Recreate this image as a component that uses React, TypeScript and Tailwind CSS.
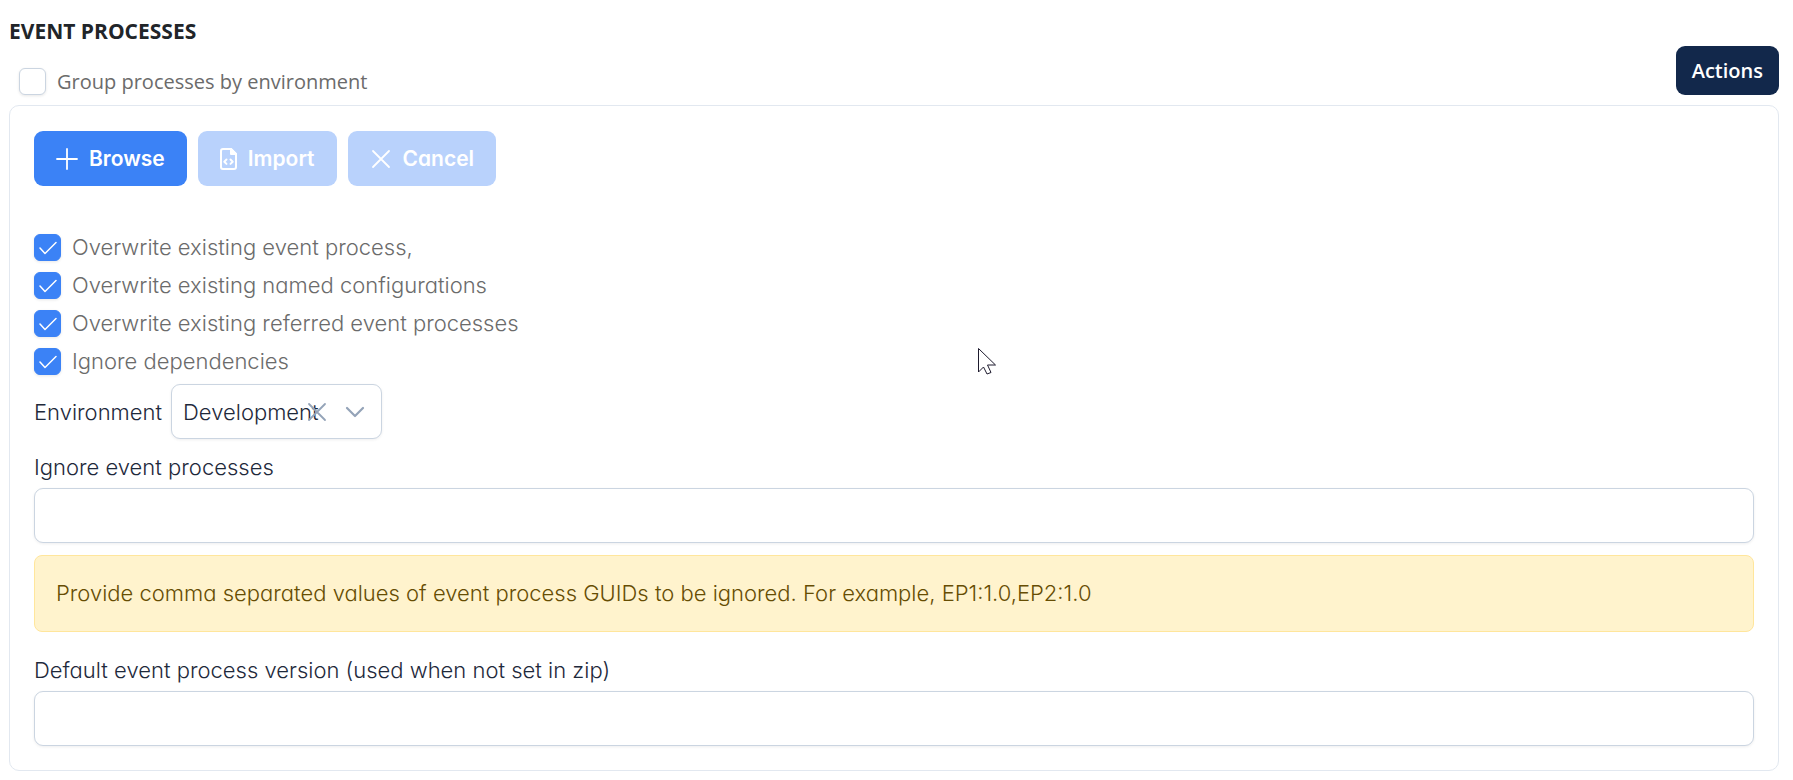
import { useState } from 'react';
import clsx from 'clsx';

const fieldClass =
  'h-[55px] rounded-[9px] border border-[#cbd5e1] bg-white shadow-[0_1px_3px_rgba(18,18,23,0.07)] outline-none focus:border-[#3b82f6]';

function PlusIcon() {
  return (
    <svg width="22" height="22" viewBox="0 0 22 22" fill="none" stroke="currentColor" strokeWidth="1.8" strokeLinecap="round" aria-hidden>
      <path d="M11 1v20M1 11h20" />
    </svg>
  );
}

function TimesIcon() {
  return (
    <svg width="22" height="22" viewBox="0 0 22 22" fill="none" stroke="currentColor" strokeWidth="1.8" strokeLinecap="round" aria-hidden>
      <path d="M3 3l16 16M19 3L3 19" />
    </svg>
  );
}

function FileCodeIcon() {
  return (
    <svg width="17" height="22" viewBox="0 0 17 22" fill="none" stroke="currentColor" strokeWidth="2" strokeLinejoin="round" strokeLinecap="round" aria-hidden>
      <path d="M3 1h8l5 5v13a2 2 0 0 1-2 2H3a2 2 0 0 1-2-2V3a2 2 0 0 1 2-2z" />
      <path d="M11 1v5h5z" fill="currentColor" />
      <path d="M6.500 11.500L4.300 13.700l2.200 2.200M10.500 11.500l2.200 2.200-2.200 2.200" />
    </svg>
  );
}

function CheckIcon() {
  return (
    <svg
      viewBox="0 0 18 14"
      width="18"
      height="14"
      fill="none"
      stroke="white"
      strokeWidth="1.5"
      strokeLinecap="round"
      strokeLinejoin="round"
      className="pointer-events-none invisible col-start-1 row-start-1 place-self-center peer-checked:visible"
      aria-hidden
    >
      <path d="M1 7l5 5.500L17 1.500" />
    </svg>
  );
}

function ChevronIcon() {
  return (
    <svg
      width="20"
      height="12"
      viewBox="0 0 20 12"
      fill="none"
      stroke="currentColor"
      strokeWidth="2.200"
      strokeLinecap="round"
      strokeLinejoin="round"
      aria-hidden
    >
      <path d="M2 2l8 8 8-8" />
    </svg>
  );
}

function CheckOption({
  id,
  label,
  defaultChecked = false,
  className = '',
}: {
  id: string;
  label: string;
  defaultChecked?: boolean;
  className?: string;
}) {
  return (
    <div className={clsx('flex items-center gap-[11px]', className)}>
      <span className="grid size-[27px] shrink-0">
        <input
          id={id}
          type="checkbox"
          defaultChecked={defaultChecked}
          className="peer col-start-1 row-start-1 size-[27px] appearance-none rounded-md border border-[#cbd5e1] bg-white shadow-[0_1px_3px_rgba(18,18,23,0.1)] checked:border-[#3b82f6] checked:bg-[#3b82f6]"
        />
        <CheckIcon />
      </span>
      <label htmlFor={id} className="leading-[27px] text-[#6b6b6b]">
        {label}
      </label>
    </div>
  );
}

const importOptions = [
  { id: 'overwrite-process', label: 'Overwrite existing event process,' },
  { id: 'overwrite-config', label: 'Overwrite existing named configurations' },
  { id: 'overwrite-referred', label: 'Overwrite existing referred event processes' },
  { id: 'ignore-deps', label: 'Ignore dependencies' },
];

const buttonClass =
  'flex h-[55px] items-center gap-[11px] rounded-[9px] bg-[#3b82f6] px-[22px] text-[21px] font-semibold text-white disabled:bg-[#b9d2fc]';

export default function App() {
  const [environment, setEnvironment] = useState('Development');

  return (
    <div className="relative bg-white pt-4 pr-3.5 pb-2 pl-[9px] font-['Open_Sans','Noto_Sans',sans-serif] text-xl">
      <header className="flex items-end justify-between pb-2.5">
        <div>
          <h1 className="text-[21px] leading-[31px] font-bold text-[#212529]">EVENT PROCESSES</h1>
          <CheckOption id="group-by-env" label="Group processes by environment" className="mt-[21px] ml-2.5" />
        </div>
        <button type="button" className="h-[49px] rounded-[9px] bg-[#12284b] px-4 font-semibold text-white">
          Actions
        </button>
      </header>

      <section className="rounded-[10px] border border-[#e2e8f0] px-6 pt-[25px] pb-6 font-['Inter',sans-serif] text-[22px] leading-[30px] font-light text-[#1e293b] [font-feature-settings:'cv11']">
        <div className="flex gap-[11px]">
          <button type="button" className={buttonClass}>
            <PlusIcon />
            Browse
          </button>
          <button type="button" disabled className={buttonClass}>
            <FileCodeIcon />
            Import
          </button>
          <button type="button" disabled className={buttonClass}>
            <TimesIcon />
            Cancel
          </button>
        </div>

        <div className="mt-12 flex flex-col gap-[11px]">
          {importOptions.map((o) => (
            <CheckOption key={o.id} id={o.id} label={o.label} defaultChecked />
          ))}
        </div>

        <div className="mt-[9px] flex items-center gap-[9px]">
          <label htmlFor="environment">Environment</label>
          <div className="relative">
            <select
              id="environment"
              value={environment}
              onChange={(e) => setEnvironment(e.target.value)}
              className={clsx(fieldClass, 'w-[211px] appearance-none pl-[11px]')}
            >
              <option value="" />
              <option>Development</option>
              <option>Production</option>
            </select>
            {/* clear button sits over the end of a long value */}
            <button
              type="button"
              aria-label="Clear environment"
              onClick={() => setEnvironment('')}
              className="absolute inset-y-0 right-[54px] text-[#94a3b8]"
            >
              <TimesIcon />
            </button>
            <span className="pointer-events-none absolute inset-y-0 right-[17px] flex items-center text-[#94a3b8]">
              <ChevronIcon />
            </span>
          </div>
        </div>

        <div className="mt-[13px] flex flex-col gap-1.5">
          <label htmlFor="ignore-processes">Ignore event processes</label>
          <input id="ignore-processes" type="text" className={clsx(fieldClass, 'w-full px-3')} />
        </div>

        <p className="mt-3 rounded-lg border border-[#ffe69c] bg-[#fff3cd] px-[21px] py-[22px] leading-[31px] text-[#664d03]">
          Provide comma separated values of event process GUIDs to be ignored. For example, EP1:1.0,EP2:1.0
        </p>

        <div className="mt-[23px] flex flex-col gap-1.5">
          <label htmlFor="default-version">Default event process version (used when not set in zip)</label>
          <input id="default-version" type="text" className={clsx(fieldClass, 'w-full px-3')} />
        </div>
      </section>

      {/* Mouse pointer */}
      <svg
        width="20"
        height="28"
        viewBox="0 0 20 28"
        fill="white"
        stroke="#1e1b2e"
        strokeWidth="1"
        className="pointer-events-none absolute top-[347px] left-[978px]"
        aria-hidden
      >
        <path d="M.5 1.500v23.500l5-5 3.500 7 4-1.500-3.500-7.500h8z" />
      </svg>
    </div>
  );
}
